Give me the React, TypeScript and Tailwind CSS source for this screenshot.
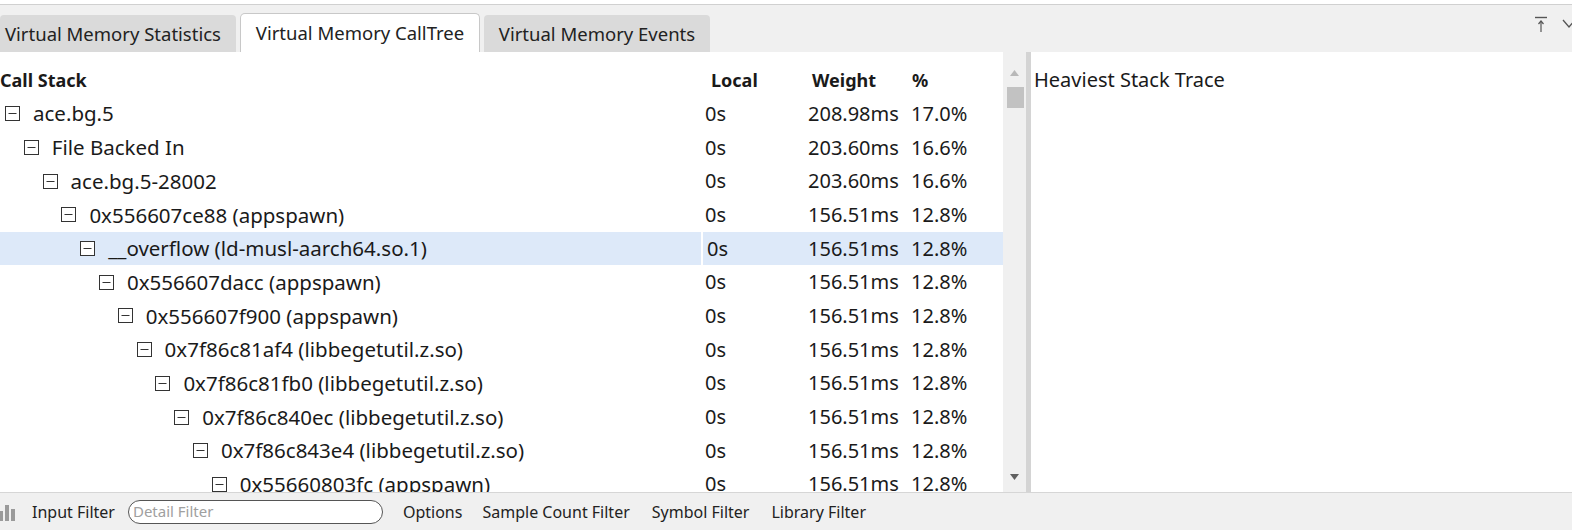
import React from 'react';

type Row = { name: string; level: number; local: string; weight: string; pct: string };

const rows: Row[] = [
  { name: 'ace.bg.5', level: 0, local: '0s', weight: '208.98ms', pct: '17.0%' },
  { name: 'File Backed In', level: 1, local: '0s', weight: '203.60ms', pct: '16.6%' },
  { name: 'ace.bg.5-28002', level: 2, local: '0s', weight: '203.60ms', pct: '16.6%' },
  { name: '0x556607ce88 (appspawn)', level: 3, local: '0s', weight: '156.51ms', pct: '12.8%' },
  { name: '__overflow (ld-musl-aarch64.so.1)', level: 4, local: '0s', weight: '156.51ms', pct: '12.8%' },
  { name: '0x556607dacc (appspawn)', level: 5, local: '0s', weight: '156.51ms', pct: '12.8%' },
  { name: '0x556607f900 (appspawn)', level: 6, local: '0s', weight: '156.51ms', pct: '12.8%' },
  { name: '0x7f86c81af4 (libbegetutil.z.so)', level: 7, local: '0s', weight: '156.51ms', pct: '12.8%' },
  { name: '0x7f86c81fb0 (libbegetutil.z.so)', level: 8, local: '0s', weight: '156.51ms', pct: '12.8%' },
  { name: '0x7f86c840ec (libbegetutil.z.so)', level: 9, local: '0s', weight: '156.51ms', pct: '12.8%' },
  { name: '0x7f86c843e4 (libbegetutil.z.so)', level: 10, local: '0s', weight: '156.51ms', pct: '12.8%' },
  { name: '0x55660803fc (appspawn)', level: 11, local: '0s', weight: '156.51ms', pct: '12.8%' },
];

const SELECTED = 4;

function MinusBox() {
  return (
    <svg width="15" height="15" viewBox="0 0 15 15" className="shrink-0">
      <rect x="0.5" y="0.5" width="14" height="14" fill="white" stroke="#333" />
      <line x1="3.5" y1="7.5" x2="11.5" y2="7.5" stroke="#333" />
    </svg>
  );
}

export default function App() {
  return (
    <div
      className="w-[1572px] h-[530px] overflow-hidden bg-white text-[#1a1a1a] flex flex-col"
      style={{ fontFamily: '"Noto Sans", "Noto Sans CJK SC", sans-serif' }}
    >
      {/* Tabs */}
      <div className="h-[48px] shrink-0 bg-[#f0f0f0] border-t border-[#d0d0d0] mt-[4px] flex items-end relative">
        <div className="flex items-end gap-[4px] h-full">
          <div className="h-[37px] px-[5px] w-[236px] bg-[#dadada] rounded-t-[4px] flex items-center text-[18.5px] text-[#222]">
            Virtual Memory Statistics
          </div>
          <div className="h-[39px] w-[240px] bg-white border border-b-0 border-[#c8c8c8] rounded-t-[5px] flex items-center justify-center text-[18.5px] text-[#222]">
            Virtual Memory CallTree
          </div>
          <div className="h-[37px] w-[226px] bg-[#dadada] rounded-t-[4px] flex items-center justify-center text-[18.5px] text-[#222]">
            Virtual Memory Events
          </div>
        </div>
        <div className="absolute right-[4px] top-[10px] flex items-center gap-[14px] text-[#555]">
          <svg width="14" height="18" viewBox="0 0 14 18">
            <line x1="1" y1="2.5" x2="13" y2="2.5" stroke="#555" strokeWidth="1.4" />
            <line x1="7" y1="6" x2="7" y2="17" stroke="#555" strokeWidth="1.2" />
            <path d="M4.5 9 L7 6 L9.5 9" fill="none" stroke="#555" strokeWidth="1.2" />
          </svg>
          <svg width="14" height="10" viewBox="0 0 14 10" className="mr-[-8px]">
            <path d="M1 1 L7 8 L13 1" fill="none" stroke="#555" strokeWidth="1.3" />
          </svg>
        </div>
      </div>

      {/* Main */}
      <div className="flex-1 flex min-h-0">
        <div className="w-[1003px] shrink-0 pt-[12px] overflow-hidden">
          <div className="h-[33px] flex items-center font-bold text-[18px]">
            <div className="w-[701px]">Call Stack</div>
            <div className="w-[99px] pl-[10px]">Local</div>
            <div className="w-[105px] pl-[12px]">Weight</div>
            <div className="pl-[7px]">%</div>
          </div>
          {rows.map((r, i) => (
            <div
              key={i}
              className={`h-[33.7px] flex items-center text-[20px] ${i === SELECTED ? 'bg-[#dde9f9]' : ''}`}
            >
              <div
                className="w-[701px] shrink-0 flex items-center gap-[13px] whitespace-nowrap text-[20.5px]"
                style={{ paddingLeft: 5 + r.level * 18.8 }}
              >
                <MinusBox />
                <span>{r.name}</span>
              </div>
              <div className={`w-[99px] shrink-0 pl-[4px] h-full flex items-center ${i === SELECTED ? 'border-l-2 border-white' : ''}`}>
                {r.local}
              </div>
              <div className="w-[105px] shrink-0 pl-[8px] whitespace-nowrap">{r.weight}</div>
              <div className="pl-[6px] whitespace-nowrap">{r.pct}</div>
            </div>
          ))}
        </div>

        {/* Scrollbar */}
        <div className="w-[23px] shrink-0 bg-[#f0f0f0] relative">
          <svg width="9" height="6" viewBox="0 0 9 6" className="absolute top-[18px] left-[7px]">
            <path d="M0 6 L4.5 0 L9 6 Z" fill="#b8b8b8" />
          </svg>
          <div className="absolute top-[35px] left-[4px] w-[17px] h-[21px] bg-[#c2c2c2]" />
          <svg width="9" height="6" viewBox="0 0 9 6" className="absolute bottom-[12px] left-[7px]">
            <path d="M0 0 L4.5 6 L9 0 Z" fill="#606060" />
          </svg>
        </div>
        <div className="w-[5px] shrink-0 bg-[#d4d4d4]" />

        {/* Right panel */}
        <div className="flex-1 pl-[3px] pt-[13px] text-[20px] whitespace-nowrap">Heaviest Stack Trace</div>
      </div>

      {/* Bottom bar */}
      <div className="h-[38px] shrink-0 bg-[#f0f0f0] border-t border-[#d6d6d6] flex items-center text-[16px] text-[#222]">
        <svg width="16" height="18" viewBox="0 0 16 18" className="ml-0 mr-[16px]">
          <rect x="0" y="8" width="3" height="10" fill="#9a9a9a" />
          <rect x="5" y="2" width="4" height="16" fill="#9a9a9a" />
          <rect x="11" y="6" width="4" height="12" fill="#9a9a9a" />
        </svg>
        <span>Input Filter</span>
        <div className="ml-[13px] w-[255px] h-[24px] rounded-full border border-[#555] bg-white flex items-center pl-[4px] text-[15px] text-[#a0a0a0]">
          Detail Filter
        </div>
        <span className="ml-[20px]">Options</span>
        <span className="ml-[20px]">Sample Count Filter</span>
        <span className="ml-[22px]">Symbol Filter</span>
        <span className="ml-[22px]">Library Filter</span>
      </div>
    </div>
  );
}
